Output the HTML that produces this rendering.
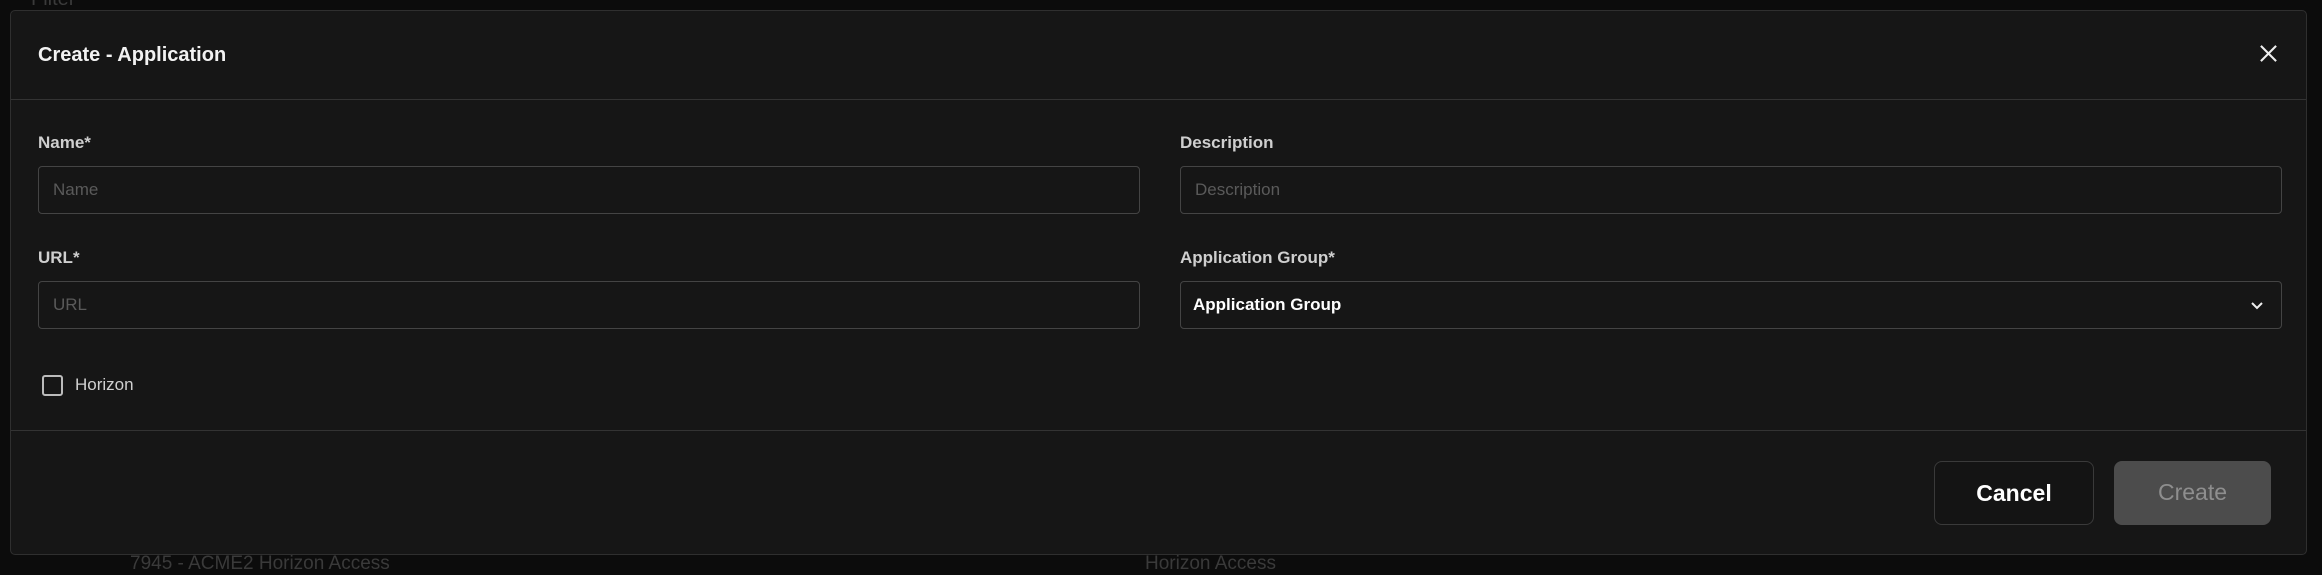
<!DOCTYPE html>
<html><head><style>
html,body{margin:0;padding:0;width:2322px;height:565px;overflow:hidden;background:#0c0c0c;font-family:"Liberation Sans",sans-serif;}
.bg{position:absolute;color:#3a3a3a;font-size:20px;}
.modal{position:absolute;left:10px;top:10px;width:2297px;height:545px;background:#161616;border:1px solid #2f2f2f;border-radius:5px;box-sizing:border-box;}
.title{position:absolute;left:27px;top:33px;color:#f2f2f2;font-size:20px;font-weight:bold;}
.hr{position:absolute;left:0;right:0;height:1px;background:#333;}
.lbl{position:absolute;color:#cfcfcf;font-size:17px;font-weight:bold;}
.inp{position:absolute;height:48px;border:1px solid #444;border-radius:4px;box-sizing:border-box;background:#161616;color:#5a5a5a;font-size:17px;line-height:46px;padding-left:14px;}
.btn{position:absolute;top:450px;height:64px;border-radius:8px;box-sizing:border-box;font-size:23px;line-height:62px;text-align:center;}
</style></head><body>
<div class="bg" style="left:31px;top:-12px;">Filter</div>
<div class="bg" style="left:130px;top:553px;font-size:19px;">7945 - ACME2 Horizon Access</div>
<div class="bg" style="left:1145px;top:553px;font-size:19px;">Horizon Access</div>
<div class="modal">
<div class="title">Create - Application</div>
<svg style="position:absolute;left:2248px;top:33px" width="19" height="19" viewBox="0 0 20 20"><path d="M2 2L18 18M18 2L2 18" stroke="#eee" stroke-width="2.2"/></svg>
<div class="hr" style="top:88px"></div>
<div class="lbl" style="left:27px;top:122px">Name*</div>
<div class="inp" style="left:27px;top:155px;width:1102px">Name</div>
<div class="lbl" style="left:1169px;top:122px">Description</div>
<div class="inp" style="left:1169px;top:155px;width:1102px">Description</div>
<div class="lbl" style="left:27px;top:237px">URL*</div>
<div class="inp" style="left:27px;top:270px;width:1102px">URL</div>
<div class="lbl" style="left:1169px;top:237px">Application Group*</div>
<div class="inp" style="left:1169px;top:270px;width:1102px;color:#fff;font-weight:bold;padding-left:12px">Application Group</div>
<svg style="position:absolute;left:2239px;top:290px" width="14" height="10" viewBox="0 0 14 10"><path d="M2 2L7 7L12 2" stroke="#eee" stroke-width="2" fill="none"/></svg>
<div style="position:absolute;left:31px;top:364px;width:21px;height:21px;border:2px solid #bbb;border-radius:3px;box-sizing:border-box"></div>
<div class="lbl" style="left:64px;top:364px;font-weight:normal;color:#d0d0d0">Horizon</div>
<div class="hr" style="top:419px"></div>
<div class="btn" style="left:1923px;width:160px;border:1px solid #3a3a3a;background:#141414;color:#fff;font-weight:bold">Cancel</div>
<div class="btn" style="left:2103px;width:157px;background:#4c4c4c;color:#8e8e8e">Create</div>
</div>
</body></html>
